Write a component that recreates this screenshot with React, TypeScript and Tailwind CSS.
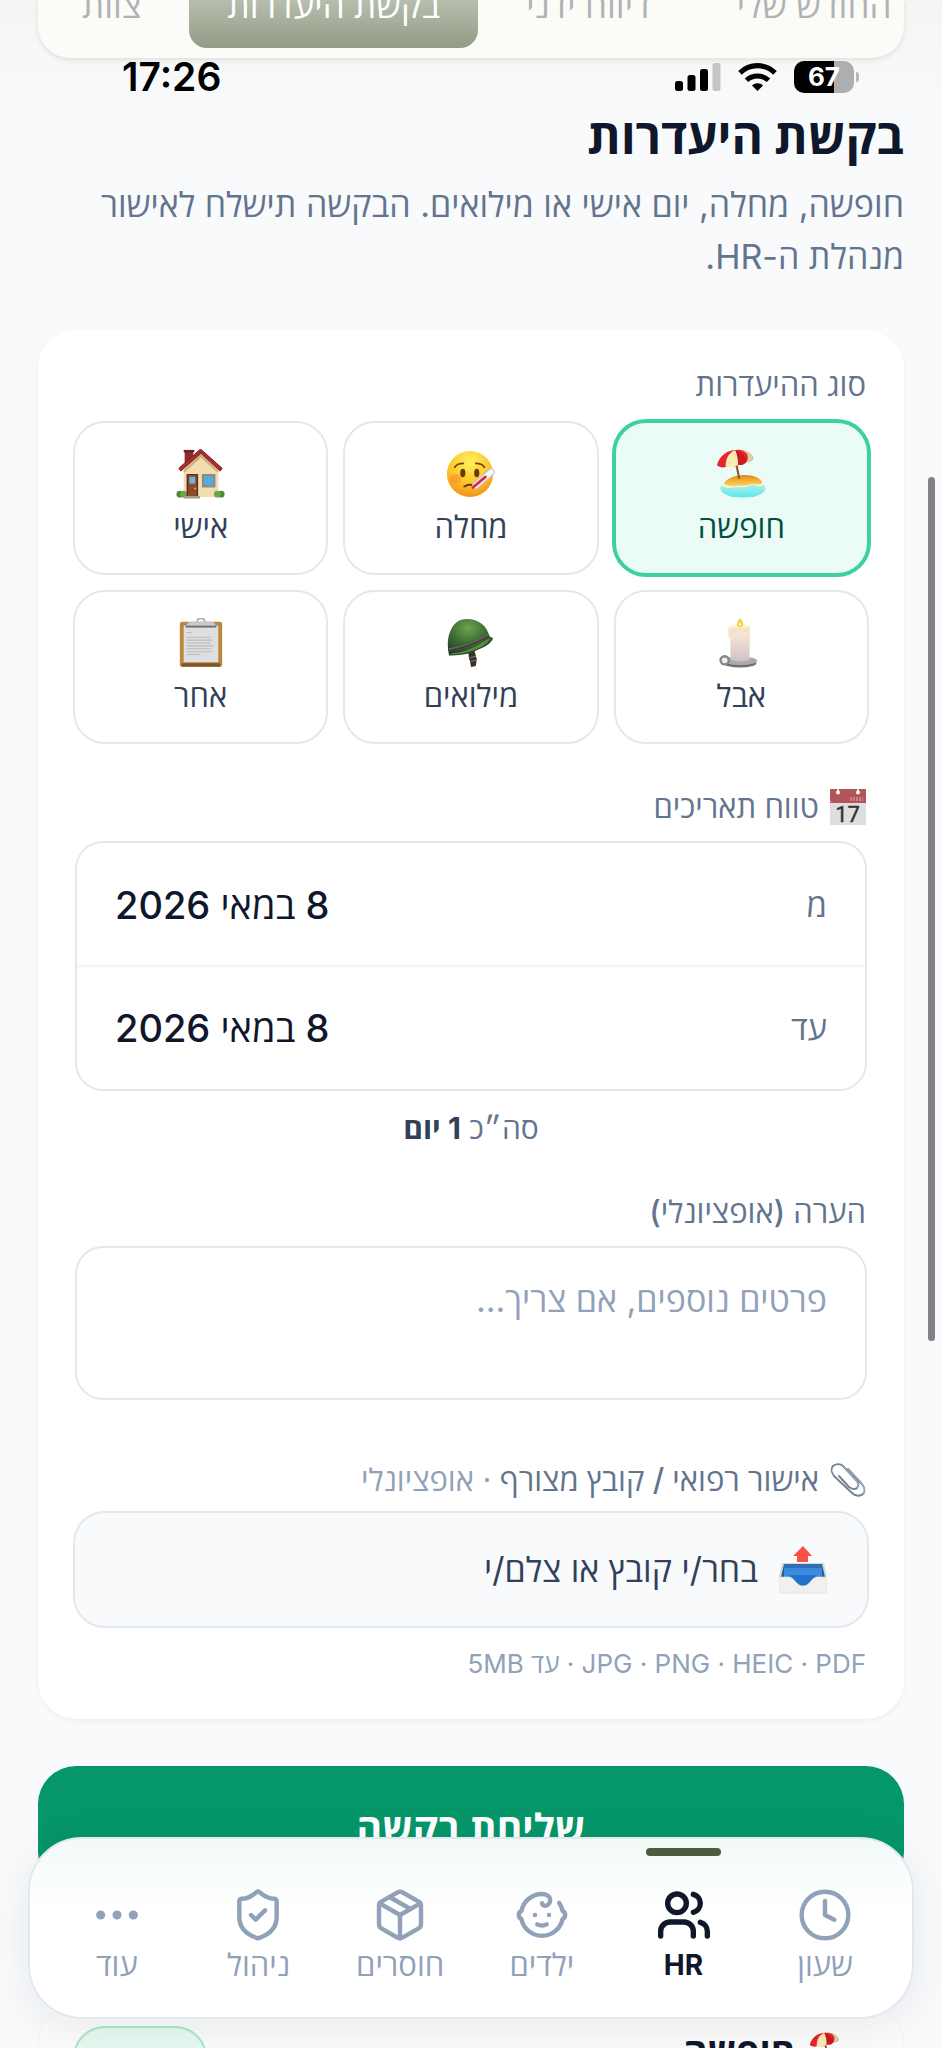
import type { ReactNode } from "react";
import { Baby, Clock, Ellipsis, Package, ShieldCheck, Users } from "lucide-react";

function Beach({ className }: { className?: string }) {
  return (
    <svg viewBox="0 0 52 52" className={className} aria-hidden="true">
      <defs>
        <linearGradient id="sand" x1="0" y1="0" x2="0" y2="1">
          <stop offset="0" stopColor="#c98a3a" />
          <stop offset="0.4" stopColor="#f3a928" />
          <stop offset="1" stopColor="#f8d878" />
        </linearGradient>
        <linearGradient id="sea" x1="0" y1="0" x2="0" y2="1">
          <stop offset="0" stopColor="#c9f5ea" />
          <stop offset="1" stopColor="#5be6ea" />
        </linearGradient>
      </defs>
      <ellipse cx="28" cy="41" rx="23.500" ry="9.500" fill="url(#sea)" />
      <path d="M6 38c3-5 10-11 23-11 12 0 20 4 20 10-4 4-9-1-14 1-6 4-11 0-17 2-5 1-10 0-12-2z" fill="#fff3cd" />
      <path d="M8 36c3-5 11-9 21-9 11 0 18 3 19 9-4 2-9 0-13 1-7 3-12 0-17 2-4 0-8-1-10-3z" fill="url(#sand)" />
      <path d="M21 15l3 15" stroke="#8a5a2c" strokeWidth="2.200" strokeLinecap="round" />
      <path d="M1 17C3 8 11 1 21 1c9-1 16 3 18 9-2 2-4 4-7 3-3 4-6 4-8 3-4 4-8 3-11 1-4 3-8 3-12 0z" fill="#e5252a" />
      <path d="M10 18C10 10 13 4 20 1c3 5 4 10 3 15-4 4-9 4-13 2z" fill="#fdeab5" />
      <path d="M24 1c8 1 11 6 8 12 3 1 5-1 7-3C37 4 31 1 24 1z" fill="#dcd0a4" />
      <path d="M20 1c2 5 3 10 3 15 3 1 6 0 9-3C30 7 26 3 20 1z" fill="#cf1820" />
    </svg>
  );
}

function SickFace({ className }: { className?: string }) {
  return (
    <svg viewBox="0 0 52 52" className={className} aria-hidden="true">
      <defs>
        <radialGradient id="face" cx="0.5" cy="0.25" r="0.8">
          <stop offset="0" stopColor="#fff25a" />
          <stop offset="0.55" stopColor="#fdc62c" />
          <stop offset="1" stopColor="#f08a12" />
        </radialGradient>
      </defs>
      <circle cx="25" cy="26" r="24" fill="url(#face)" />
      <ellipse cx="10" cy="31" rx="6" ry="5" fill="#f9762c" opacity="0.4" />
      <ellipse cx="17.500" cy="25" rx="2.700" ry="4.400" fill="#6b3a0a" />
      <ellipse cx="32" cy="25" rx="2.700" ry="4.400" fill="#6b3a0a" />
      <path d="M9 19c2-3 5-4 9-4M31 15c4 0 7 1 9 4" stroke="#7a4410" strokeWidth="1.800" fill="none" strokeLinecap="round" />
      <path d="M19 39c3-2 7-2 10-1" stroke="#6b3a0a" strokeWidth="2" fill="none" strokeLinecap="round" />
      <path d="M31 38L47 24" stroke="#b9c3d3" strokeWidth="7.500" strokeLinecap="round" />
      <path d="M31 38L47 24" stroke="#f3f6fa" strokeWidth="5.500" strokeLinecap="round" />
      <path d="M28 40l13-11" stroke="#dd2937" strokeWidth="2.800" strokeLinecap="round" />
    </svg>
  );
}

function House({ className }: { className?: string }) {
  return (
    <svg viewBox="0 0 52 52" className={className} aria-hidden="true">
      <rect x="9" y="1" width="9" height="14" fill="#8f2a28" />
      <rect x="8" y="1" width="11" height="2.500" fill="#6f201f" />
      <path d="M26 3L8 21v29h36V21z" fill="#f2dcb1" />
      <path d="M8 22L26 5l18 17v3L26 9 8 25z" fill="#cfae7a" />
      <path d="M25.500 0L3 20l2 3L26 4.500 46 23l2-3z" fill="#a92c2f" stroke="#7b1c22" strokeWidth="1" />
      <circle cx="4" cy="47" r="3.500" fill="#4f8a31" />
      <circle cx="8" cy="47" r="3.500" fill="#6ba843" />
      <circle cx="47" cy="47" r="3.500" fill="#4f8a31" />
      <circle cx="43" cy="47" r="3.500" fill="#6ba843" />
      <rect x="11" y="26" width="12" height="23" fill="#5a2d1c" />
      <rect x="12.500" y="27" width="9" height="22" fill="#8c4a2b" />
      <rect x="14" y="29" width="6" height="7" fill="#6fb4dd" />
      <circle cx="20" cy="41" r="1" fill="#f0c04c" />
      <rect x="27" y="26" width="14" height="14" fill="#8d8a80" />
      <rect x="29" y="28" width="10" height="10" fill="#5fa6d8" />
      <rect x="8" y="49" width="17" height="2.500" fill="#a59b8d" />
    </svg>
  );
}

function Candle({ className }: { className?: string }) {
  return (
    <svg viewBox="0 0 52 52" className={className} aria-hidden="true">
      <defs>
        <linearGradient id="wax" x1="0" y1="0" x2="0" y2="1">
          <stop offset="0" stopColor="#fdeed2" />
          <stop offset="0.4" stopColor="#efdcd2" />
          <stop offset="1" stopColor="#cfc2c4" />
        </linearGradient>
      </defs>
      <ellipse cx="25" cy="47" rx="17" ry="4.500" fill="#6f6f73" />
      <ellipse cx="25" cy="44.500" rx="18" ry="4.500" fill="#a9a9ae" />
      <circle cx="9" cy="44" r="5.500" fill="#85858a" />
      <circle cx="9" cy="44" r="3" fill="#ececf0" />
      <path d="M15 9h20v34c-3 3-17 3-20 0z" fill="url(#wax)" />
      <ellipse cx="25" cy="9" rx="10" ry="2.500" fill="#fff3cf" />
      <path d="M13 9c5 2 15 2 22 0v10c0 2-2 2-2 0v-5c-2 1-3 1-4 0v4c0 2-2 2-2 0v-4h-6c-1 2-2 0-3 1v3c0 2-2 2-2 0v-3l-1 5c0 2-2 2-2 0z" fill="#f3e2c8" />
      <path d="M25 0c3 4 4 6 3 8-2 2-5 2-6 0-1-2 1-5 3-8z" fill="#f8c93a" />
      <path d="M25 4c1 2 2 3 1 4h-2c-1-1 0-2 1-4z" fill="#fff6b8" />
    </svg>
  );
}

function Helmet({ className }: { className?: string }) {
  return (
    <svg viewBox="0 0 52 52" className={className} aria-hidden="true">
      <defs>
        <radialGradient id="shell" cx="0.45" cy="0.25" r="0.75">
          <stop offset="0" stopColor="#6fa252" />
          <stop offset="0.5" stopColor="#3f7136" />
          <stop offset="1" stopColor="#1f3f2a" />
        </radialGradient>
      </defs>
      <path d="M23 35l6-3 2 7 1 4-1 7-5 1-1-6-1-3z" fill="#3a302c" />
      <path d="M25 41l6-1M26 45l5-1" stroke="#8b7d72" strokeWidth="1" />
      <path d="M3 38C-1 20 6 1 21 1c14 0 22 8 24 18l4 2c-2 6-9 9-18 13-8 4-19 5-28 5z" fill="url(#shell)" />
      <path d="M5 37c11-1 22-5 30-10 4-3 8-4 11-6-4 7-9 9-16 12-8 3-16 5-25 5z" fill="#5d8a3f" />
      <path d="M3 33c14-2 27-7 42-15" stroke="#4b3d37" strokeWidth="3" fill="none" />
      <path d="M3 32c14-2 27-7 42-15" stroke="#8c7f6f" strokeWidth="0.800" fill="none" />
    </svg>
  );
}

function Clipboard({ className }: { className?: string }) {
  return (
    <svg viewBox="0 0 52 52" className={className} aria-hidden="true">
      <rect x="4" y="4" width="44" height="47" rx="2.500" fill="#b9873f" />
      <rect x="6" y="47" width="40" height="3.500" rx="1" fill="#80552c" />
      <rect x="8" y="8" width="36" height="38" fill="#dfdfe0" />
      <path d="M11 15h5M11 20h25M11 23h27M11 26h25M11 29h28M11 32h26M11 35h27M11 38h14" stroke="#bcbcbf" strokeWidth="1.100" />
      <path d="M22 4c0-5 8-5 8 0" stroke="#a9b3bd" strokeWidth="2" fill="none" />
      <path d="M11 9c0-4 2-5 6-5h18c4 0 6 1 6 5z" fill="#c5c9cd" />
      <rect x="10" y="8" width="32" height="2" rx="1" fill="#676b70" />
    </svg>
  );
}

function CalendarEmoji({ className }: { className?: string }) {
  return (
    <svg viewBox="0 0 36 36" className={className} aria-hidden="true">
      <rect x="0" y="0" width="36" height="36" rx="1" fill="#dedede" />
      <path d="M0 1q0-1 1-1h34q1 0 1 1v13H0z" fill="#b25558" />
      <path d="M8 0v3M28 0v3" stroke="#fff" strokeWidth="1.500" />
      <circle cx="8" cy="3.500" r="2" fill="#fff" />
      <circle cx="28" cy="3.500" r="2" fill="#fff" />
      <text x="2" y="12.500" fontSize="7" fontWeight="500" fill="#e7b9ba" fontFamily="Inter, sans-serif">JUL</text>
      <path d="M20 10h13" stroke="#c98084" strokeWidth="4" strokeDasharray="2 1" />
      <text x="17.500" y="32.500" fontSize="22" fontWeight="400" textAnchor="middle" fill="#333335" stroke="#333335" strokeWidth="0.400" fontFamily="Roboto, sans-serif">17</text>
    </svg>
  );
}

function Paperclip({ className }: { className?: string }) {
  return (
    <svg viewBox="0 0 36 36" className={className} aria-hidden="true" fill="none" strokeLinecap="round" strokeLinejoin="round">
      <path
        d="M18 7l14 15c3 4 3 8 1 10s-7 3-11-1L4 14C1 10 1 6 3 4s7-3 10 0l13 14c3 3 3 6 1 8s-5 1-8-1L9 14"
        stroke="#76828f"
        strokeWidth="1.900"
      />
      <path d="M18 7l14 15c3 4 3 8 1 10M13 4l13 14c3 3 3 6 1 8" stroke="#a9bfd6" strokeWidth="0.900" />
    </svg>
  );
}

function Outbox({ className }: { className?: string }) {
  return (
    <svg viewBox="0 0 48 48" className={className} aria-hidden="true">
      <defs>
        <linearGradient id="tray" x1="0" y1="0" x2="0" y2="1">
          <stop offset="0" stopColor="#3b86d6" />
          <stop offset="1" stopColor="#3e92e6" />
        </linearGradient>
      </defs>
      <path d="M3 17h42l3 14v14q0 1-2 1H2q-2 0-2-1V31z" fill="#d5d7d8" />
      <path d="M5 18h38v20H5z" fill="url(#tray)" />
      <path d="M5 18h38v4H5z" fill="#2d6fb6" />
      <path d="M5 18v13H2zM43 18v13h3z" fill="#275f9d" />
      <path d="M10 29h28l-6 9-8 4-8-4z" fill="#1f73cb" />
      <path d="M0 31h9c4 0 5 2 7 4s4 5 8 5 6-3 8-5 3-4 7-4h9v14q0 2-2 2H2q-2 0-2-2z" fill="#f1f0ee" stroke="#dedede" strokeWidth="0.600" />
      <path d="M24 0l9 10h-4v6H18v-6h-4z" fill="#fb5046" />
    </svg>
  );
}

function StatusIcons() {
  return (
    <div className="flex items-center gap-[17px]">
      <svg viewBox="0 0 46 28" className="h-7 w-[46px]" aria-label="קליטה">
        <rect x="0" y="18" width="8" height="10" rx="2.500" />
        <rect x="12.500" y="12" width="8" height="16" rx="2.500" />
        <rect x="25" y="6" width="8" height="22" rx="2.500" />
        <rect x="37.500" y="0" width="8" height="28" rx="2.500" fill="#c4c5c6" />
      </svg>
      <svg viewBox="0 0 39 28" className="h-7 w-[39px]" aria-label="רשת אלחוטית">
        <path d="M19.500 28l-5.500-5.400c3-3 8-3 11 0z" />
        <path d="M8.500 17.300c6-5.800 16-5.800 22 0" fill="none" stroke="#000" strokeWidth="5" />
        <path d="M2 9.900c9.700-9.600 25.300-9.600 35 0" fill="none" stroke="#000" strokeWidth="5.200" />
      </svg>
      <div className="flex items-center gap-0.5">
        <div className="flex h-8 w-[60px] items-center justify-center rounded-[10px] bg-linear-to-r from-black from-66% to-[#adaeaf] to-66% text-[26px] leading-8 font-bold text-white">
          67
        </div>
        <div className="h-2.5 w-[3px] rounded-r-full bg-[#b4b5b6]" />
      </div>
    </div>
  );
}

const tabs = [
  { label: "החודש שלי", active: false },
  { label: "דיווח ידני", active: false },
  { label: "בקשת היעדרות", active: true },
  { label: "צוות", active: false },
];

const kinds = [
  { label: "חופשה", Icon: Beach, active: true },
  { label: "מחלה", Icon: SickFace, active: false },
  { label: "אישי", Icon: House, active: false },
  { label: "אבל", Icon: Candle, active: false },
  { label: "מילואים", Icon: Helmet, active: false },
  { label: "אחר", Icon: Clipboard, active: false },
];

const navItems = [
  { label: "שעון", Icon: Clock, active: false },
  { label: "HR", Icon: Users, active: true },
  { label: "ילדים", Icon: Baby, active: false },
  { label: "חוסרים", Icon: Package, active: false },
  { label: "ניהול", Icon: ShieldCheck, active: false },
  { label: "עוד", Icon: Ellipsis, active: false },
];

function DateRow({ id, label }: { id: string; label: string }) {
  return (
    <div className="flex h-[123px] items-center justify-between px-[38px]">
      <label htmlFor={id} className="text-[33px] leading-10 text-slate-500">
        {label}
      </label>
      <input
        id={id}
        readOnly
        defaultValue="8 במאי 2026"
        className="w-80 bg-transparent text-left text-[38px] leading-[48px] font-medium text-slate-900 outline-none"
      />
    </div>
  );
}

function FieldLabel({ htmlFor, children }: { htmlFor: string; children: ReactNode }) {
  return (
    <label htmlFor={htmlFor} className="flex items-center gap-[11px] px-[3px] text-[31px] leading-10 font-medium text-slate-500">
      {children}
    </label>
  );
}

export default function App() {
  return (
    <div
      dir="rtl"
      lang="he"
      className="relative flex h-screen flex-col overflow-hidden bg-[#f9fafc] bg-linear-to-b from-[#f5f5f3] to-[#f9fafc] to-[120px] px-[38px] font-['Inter','Open_Sans','Liberation_Sans',sans-serif]"
    >
      <header className="-mx-[38px] flex h-16 shrink-0 items-start overflow-hidden px-[38px]">
        <nav className="flex h-[58px] min-w-0 flex-1 items-end justify-end gap-2.5 overflow-hidden rounded-b-[32px] bg-[#fbfbf8] pb-2.5 pl-1.5 shadow-[0_2px_5px_rgba(0,0,0,0.1)]">
          {tabs.map((t) => (
            <a
              key={t.label}
              href="#"
              className={
                t.active
                  ? "flex h-[86px] shrink-0 items-center rounded-[18px] bg-linear-to-b from-[#d5dacf] to-[#929b86] px-[38px] text-[35px] leading-10 font-medium text-white"
                  : "flex h-[86px] shrink-0 items-center px-[38px] text-[35px] leading-10 font-medium text-[#b1b2b4]"
              }
            >
              {t.label}
            </a>
          ))}
        </nav>
      </header>

      <div dir="ltr" className="-mt-1.5 flex h-[38px] shrink-0 items-center justify-between pr-[45px] pl-[84px]">
        <span className="text-[39px] leading-[38px] font-semibold text-black">17:26</span>
        <StatusIcons />
      </div>

      <h1 className="mt-[13px] text-[48px] leading-[56px] font-bold text-slate-900">בקשת היעדרות</h1>
      <p className="mt-3.5 text-[34px] leading-[52px] text-slate-500">
        חופשה, מחלה, יום אישי או מילואים. הבקשה תישלח לאישור מנהלת ה-HR.
      </p>

      <section className="mt-[47px] flex shrink-0 flex-col rounded-[38px] bg-white px-[35px] py-[35px] shadow-[0_2px_5px_rgba(15,23,42,0.05)]">
        <h2 className="px-[3px] text-[31px] leading-10 font-medium text-slate-500">סוג ההיעדרות</h2>
        <div className="mt-4 grid grid-cols-3 gap-[15px]">
          {kinds.map(({ label, Icon, active }) => (
            <button
              key={label}
              type="button"
              aria-pressed={active}
              className={
                active
                  ? "flex h-[154px] flex-col items-center rounded-[32px] border-2 border-[#3dd19b] bg-[#eafcf5] pt-[26px] text-emerald-900 ring-2 ring-[#3dd19b]"
                  : "flex h-[154px] flex-col items-center rounded-[32px] border-2 border-slate-200 bg-white pt-[26px] text-slate-700"
              }
            >
              <Icon className="size-[50px]" />
              <span className="mt-2 text-[31px] leading-10 font-medium">{label}</span>
            </button>
          ))}
        </div>

        <div className="mt-[43px] flex flex-col">
          <FieldLabel htmlFor="from">
            <CalendarEmoji className="size-9" />
            טווח תאריכים
          </FieldLabel>
          <div className="mx-0.5 mt-3.5 rounded-[28px] border-2 border-slate-200">
            <DateRow id="from" label="מ" />
            <div className="-my-px h-0.5 bg-slate-100" />
            <DateRow id="to" label="עד" />
          </div>
        </div>
        <p className="mt-[17px] text-center text-[30px] leading-10 text-slate-500">
          סה״כ <strong className="font-bold text-slate-700">1 יום</strong>
        </p>

        <div className="mt-11 flex flex-col">
          <FieldLabel htmlFor="note">הערה (אופציונלי)</FieldLabel>
          <textarea
            id="note"
            placeholder="פרטים נוספים, אם צריך..."
            className="mx-0.5 mt-3.5 h-[154px] resize-none rounded-[28px] border-2 border-slate-200 px-[38px] py-[26px] text-[34px] leading-[52px] text-slate-700 outline-none placeholder:text-slate-400"
          />
        </div>

        <div className="mt-[60px] flex flex-col">
          <FieldLabel htmlFor="file">
            <Paperclip className="size-9" />
            <span>
              אישור רפואי / קובץ מצורף <span className="font-normal text-slate-400">· אופציונלי</span>
            </span>
          </FieldLabel>
          <button
            id="file"
            type="button"
            className="mt-[11px] flex h-[117px] items-center gap-[21px] rounded-[32px] border-2 border-slate-200 bg-[#f8fafc] px-10 text-[34px] leading-[52px] text-slate-700"
          >
            <Outbox className="size-12" />
            בחר/י קובץ או צלם/י
          </button>
          <p className="mt-4 px-[3px] text-[26px] leading-10 text-slate-400">JPG · PNG · HEIC · PDF · עד 5MB</p>
        </div>
      </section>

      <button type="submit" className="mt-[47px] h-[124px] shrink-0 rounded-[38px] bg-[#059669] text-[39px] leading-[52px] font-bold text-white">
        שליחת בקשה
      </button>

      <section className="mt-[115px] flex h-40 shrink-0 items-start justify-between rounded-[38px] border border-slate-100 bg-[#fbfbfb] px-[34px] pt-5">
        <h3 className="flex items-center gap-3.5 pr-5 text-[37px] leading-[52px] font-bold text-slate-900">
          <Beach className="size-10" />
          חופשה
        </h3>
        <span className="h-16 w-[134px] rounded-[32px] border-2 border-[#a7e8cb] bg-[#e8f9f1]" />
      </section>

      <nav className="absolute inset-x-7 bottom-[29px] flex h-[182px] rounded-[54px] border-2 border-[#e2e8f0] bg-linear-to-b from-[#f2faf7] to-white to-40% px-4 shadow-[0_8px_44px_rgba(15,23,42,0.08)]">
        {navItems.map(({ label, Icon, active }) => (
          <a
            key={label}
            href="#"
            className={
              active
                ? "relative flex flex-1 flex-col items-center pt-12 text-slate-900"
                : "relative flex flex-1 flex-col items-center pt-12 text-slate-400"
            }
          >
            {active && <span className="absolute top-[9px] h-2 w-[75px] rounded-full bg-[#4b5d3e]" />}
            <Icon className="size-[56px]" strokeWidth={active ? 2.3 : 1.9} />
            <span className={active ? "mt-1 text-[28px] leading-9 font-bold" : "mt-1 text-[31px] leading-9 font-medium"}>
              {label}
            </span>
          </a>
        ))}
      </nav>

      <div className="absolute top-[477px] left-full -ml-3.5 h-[864px] w-[7px] rounded-full bg-[#7f8184]" />
    </div>
  );
}
